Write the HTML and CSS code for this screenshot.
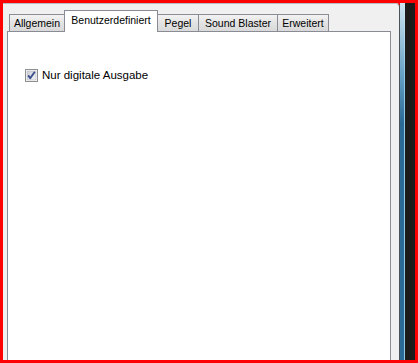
FILE: index.html
```html
<!DOCTYPE html>
<html>
<head>
<meta charset="utf-8">
<link rel="stylesheet" href="styles.css">
</head>
<body>
<div class="frame">
  <div class="dialog">
    <div class="tabs">
      <div class="tab t-allg">Allgemein</div>
      <div class="tab t-benu active">Benutzerdefiniert</div>
      <div class="tab t-pegel">Pegel</div>
      <div class="tab t-sb">Sound Blaster</div>
      <div class="tab t-erw">Erweitert</div>
    </div>
    <div class="panel">
      <label class="check">
        <span class="box">
          <svg width="13" height="13" viewBox="0 0 13 13">
            <defs>
              <linearGradient id="g" x1="0" y1="0" x2="1" y2="1">
                <stop offset="0" stop-color="#c9cdd4"/>
                <stop offset="1" stop-color="#f4f5f7"/>
              </linearGradient>
            </defs>
            <rect x="0.5" y="0.5" width="12" height="12" fill="#fff" stroke="#8e8f8f"/>
            <rect x="2" y="2" width="9" height="9" fill="url(#g)" stroke="#b1b5bd" stroke-width="0.6"/>
            <path d="M3.2 6.4 L5.2 9.2 L9.8 2.8" fill="none" stroke="#3c4f8f" stroke-width="1.9" stroke-linejoin="round"/>
          </svg>
        </span>
        <span class="label">Nur digitale Ausgabe</span>
      </label>
    </div>
  </div>
  <div class="edge"></div>
</div>
</body>
</html>
```
FILE: styles.css
```css
html, body {
  margin: 0;
  padding: 0;
}
body {
  width: 418px;
  height: 363px;
  overflow: hidden;
  font-family: "Liberation Sans", Arial, sans-serif;
}
.frame {
  box-sizing: border-box;
  width: 418px;
  height: 363px;
  padding: 3px 3px 3px 3px;
  background: #fe0000;
  display: flex;
  overflow: hidden;
}
.dialog {
  box-sizing: border-box;
  width: 397px;
  flex: none;
  background: #f0f0f0;
  border-top: 1px solid #b9bcc0;
  border-right: 1px solid #4d5257;
  border-top-right-radius: 4px;
  padding: 0 8px 0 4px;
  display: flex;
  flex-direction: column;
  overflow: hidden;
}
.tabs {
  display: flex;
  align-items: flex-end;
  padding: 7px 0 0 2px;
  height: 27px;
  box-sizing: border-box;
}
.tab {
  box-sizing: border-box;
  flex: none;
  height: 17px;
  margin-right: -1px;
  border: 1px solid #898c95;
  border-bottom: none;
  background: linear-gradient(#f3f3f3, #e3e3e3 50%, #d9d9d9);
  font-size: 10.5px;
  line-height: 17px;
  text-align: center;
  color: #000;
  white-space: nowrap;
}
.t-allg { width: 56px; }
.t-benu { width: 94px; }
.t-pegel { width: 42px; }
.t-sb { width: 80px; }
.t-erw { width: 52px; }
.tab.active {
  position: relative;
  z-index: 1;
  height: 22px;
  margin-bottom: -1px;
  padding-top: 3px;
  background: #fff;
  line-height: 13px;
}
.panel {
  flex: 1;
  background: #fff;
  border: 1px solid #898c95;
  border-bottom: none;
  padding: 37px 0 0 17px;
}
.check {
  display: flex;
  align-items: center;
  gap: 4px;
  height: 13px;
}
.box {
  display: block;
  width: 13px;
  height: 13px;
}
.box svg {
  display: block;
}
.label {
  font-size: 11.5px;
  color: #000;
  line-height: 13px;
}
.edge {
  flex: none;
  width: 15px;
  background:
    linear-gradient(to right, transparent 0, transparent 5px, #1b1b1b 5px, #1b1b1b 15px),
    linear-gradient(to right, #2b6a96 0, #2b6a96 4px, #8fc7e6 4px, #8fc7e6 5px),
    #fff;
  position: relative;
}
.edge::before {
  content: "";
  position: absolute;
  left: 0;
  top: 0;
  width: 5px;
  height: 120px;
  background: linear-gradient(#cfe6f3, rgba(143, 199, 230, 0.6) 60%, rgba(43, 106, 150, 0));
}
```
